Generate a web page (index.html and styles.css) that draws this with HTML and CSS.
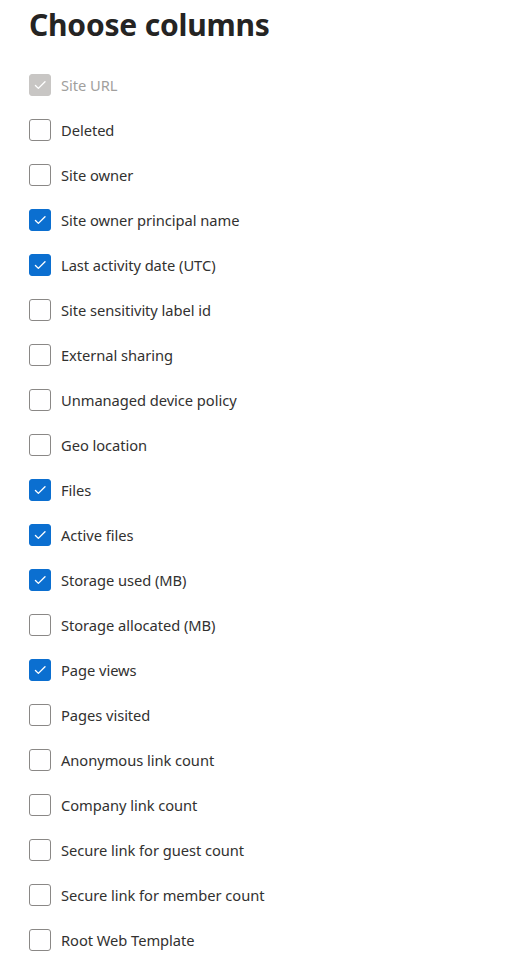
FILE: index.html
```html
<!DOCTYPE html>
<html lang="en">
<head>
<meta charset="utf-8">
<title>Choose columns</title>
<link rel="stylesheet" href="styles.css">
</head>
<body>
<div class="panel">
  <h1 class="title">Choose columns</h1>
  <ul class="list">
    <li class="row disabled"><span class="box checked"><svg viewBox="0 0 22 22"><path d="M6 11.5l3.2 3.2L16.5 7.4"/></svg></span><span class="label">Site URL</span></li>
    <li class="row"><span class="box"></span><span class="label">Deleted</span></li>
    <li class="row"><span class="box"></span><span class="label">Site owner</span></li>
    <li class="row"><span class="box checked"><svg viewBox="0 0 22 22"><path d="M6 11.5l3.2 3.2L16.5 7.4"/></svg></span><span class="label">Site owner principal name</span></li>
    <li class="row"><span class="box checked"><svg viewBox="0 0 22 22"><path d="M6 11.5l3.2 3.2L16.5 7.4"/></svg></span><span class="label">Last activity date (UTC)</span></li>
    <li class="row"><span class="box"></span><span class="label">Site sensitivity label id</span></li>
    <li class="row"><span class="box"></span><span class="label">External sharing</span></li>
    <li class="row"><span class="box"></span><span class="label">Unmanaged device policy</span></li>
    <li class="row"><span class="box"></span><span class="label">Geo location</span></li>
    <li class="row"><span class="box checked"><svg viewBox="0 0 22 22"><path d="M6 11.5l3.2 3.2L16.5 7.4"/></svg></span><span class="label">Files</span></li>
    <li class="row"><span class="box checked"><svg viewBox="0 0 22 22"><path d="M6 11.5l3.2 3.2L16.5 7.4"/></svg></span><span class="label">Active files</span></li>
    <li class="row"><span class="box checked"><svg viewBox="0 0 22 22"><path d="M6 11.5l3.2 3.2L16.5 7.4"/></svg></span><span class="label">Storage used (MB)</span></li>
    <li class="row"><span class="box"></span><span class="label">Storage allocated (MB)</span></li>
    <li class="row"><span class="box checked"><svg viewBox="0 0 22 22"><path d="M6 11.5l3.2 3.2L16.5 7.4"/></svg></span><span class="label">Page views</span></li>
    <li class="row"><span class="box"></span><span class="label">Pages visited</span></li>
    <li class="row"><span class="box"></span><span class="label">Anonymous link count</span></li>
    <li class="row"><span class="box"></span><span class="label">Company link count</span></li>
    <li class="row"><span class="box"></span><span class="label">Secure link for guest count</span></li>
    <li class="row"><span class="box"></span><span class="label">Secure link for member count</span></li>
    <li class="row"><span class="box"></span><span class="label">Root Web Template</span></li>
  </ul>
</div>
</body>
</html>
```

FILE: styles.css
```css
html, body {
  margin: 0;
  padding: 0;
  background: #ffffff;
}
body {
  font-family: "Noto Sans", "Open Sans", sans-serif;
  color: #323130;
}
.panel {
  padding: 0 0 0 29px;
}
.title {
  margin: 0;
  padding-top: 4px;
  font-size: 30px;
  line-height: 42px;
  font-weight: 700;
  color: #252423;
  letter-spacing: -0.2px;
}
.list {
  list-style: none;
  margin: 16px 0 0 0;
  padding: 0;
}
.row {
  display: flex;
  align-items: center;
  height: 45px;
  gap: 10px;
}
.box {
  box-sizing: border-box;
  width: 22px;
  height: 22px;
  border: 1px solid #8a8886;
  border-radius: 3px;
  background: #fff;
  display: flex;
  align-items: center;
  justify-content: center;
  flex: none;
}
.box svg {
  width: 22px;
  height: 22px;
  display: none;
}
.box svg path {
  fill: none;
  stroke: #ffffff;
  stroke-width: 1.5;
  stroke-linecap: round;
  stroke-linejoin: round;
}
.box.checked {
  background: #0b6fd0;
  border-color: #0b6fd0;
}
.box.checked svg {
  display: block;
}
.label {
  font-size: 14.7px;
  line-height: 20px;
  color: #323130;
  letter-spacing: -0.05px;
}
.disabled .box.checked {
  background: #c8c6c4;
  border-color: #c8c6c4;
}
.disabled .label {
  color: #a19f9d;
}
```
